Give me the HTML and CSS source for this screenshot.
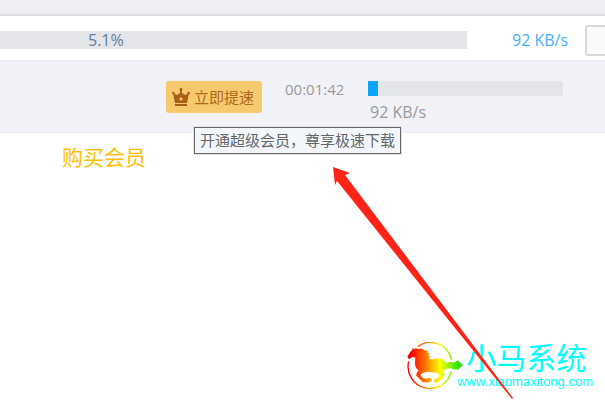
FILE: index.html
```html
<!DOCTYPE html>
<html lang="zh-CN">
<head>
<meta charset="utf-8">
<meta name="viewport" content="width=device-width, initial-scale=1">
<title>下载</title>
<link rel="stylesheet" href="styles.css">
</head>
<body>
<header class="topbar"></header>
<main>
  <section class="task">
    <div class="task-bar">5.1%</div>
    <span class="task-speed">92 KB/s</span>
    <button class="task-action" type="button" aria-label="操作"></button>
  </section>
  <section class="boost">
    <div class="boost-cta">
      <button class="boost-button" type="button">
        <svg class="crown" viewBox="0 0 18 18" aria-hidden="true">
          <path d="M1 5 5 7 8 5V2h2v3L13 7 17 5 15 15H3Z"/>
          <circle cx="1.300" cy="5" r="1.300"/><circle cx="9" cy="1.500" r="1.400"/><circle cx="16.700" cy="5" r="1.300"/>
          <path d="M3 16h12v2H3z"/>
          <path class="crown-gem" d="M9 9 11 11 9 13 7 11Z"/>
        </svg>
        立即提速
      </button>
      <div class="tooltip" role="tooltip">开通超级会员，尊享极速下载</div>
    </div>
    <time class="boost-time">00:01:42</time>
    <div class="boost-progress">
      <div class="meter"><div class="meter-fill"></div></div>
      <span class="boost-speed">92 KB/s</span>
    </div>
  </section>
  <a class="buy" href="#">购买会员</a>
</main>
<svg class="arrow" viewBox="0 0 180 234" aria-hidden="true">
  <path d="M0 0 17 6 12 8 180 231 179 232 4 14 2 18Z"/>
</svg>
<footer class="brand">
  <svg class="horse" viewBox="0 0 174 140" aria-hidden="true">
    <defs>
      <linearGradient id="rainbow" gradientUnits="userSpaceOnUse" x1="0" y1="0" x2="170" y2="0">
        <stop offset="0" stop-color="#f00"/><stop offset=".08" stop-color="#f00"/><stop offset=".3" stop-color="#ff6a00"/><stop offset=".58" stop-color="#ff0"/><stop offset=".85" stop-color="#4bea00"/><stop offset="1" stop-color="#0d0"/>
      </linearGradient>
    </defs>
    <path class="ring" d="M32 13A65 65 0 0 1 133 52M133 88A65 65 0 0 1 5 58"/>
    <path class="horse-body" d="M1 43 11 28 17 22 16 16 22 21 28 17 30 21 42 19 51 22 55 26 63 24 60 30 68 34 64 39 69 43 66 49Q74 54 84 50 101 45 110 54L118 62Q131 57 142 61L152 54 158 60 168 69 159 76 155 82 141 82 130 78 118 80 109 85 108 91 114 96 106 109 91 121 82 120 82 113 94 106 97 98 88 92Q73 91 60 89L46 93 40 98 48 108 58 110 70 107 75 116 65 121 48 120 28 101 29 92 35 85Q23 78 24 62L25 47 17 44 6 51Z"/>
  </svg>
  <div class="brand-text">
    <strong class="brand-name">小马系统</strong>
    <span class="brand-url">www.xiaomaxitong.com</span>
  </div>
</footer>
</body>
</html>
```
FILE: styles.css
```css
* {
  box-sizing: border-box;
}

body {
  position: relative;
  min-height: 100vh;
  margin: 0;
  overflow: hidden;
  display: flex;
  flex-direction: column;
  justify-content: space-between;
  background: #fff;
  color: #999;
  font: 16px/20px "Open Sans", "Noto Sans CJK SC", sans-serif;
}

button {
  margin: 0;
  padding: 0;
  font: inherit;
}

.topbar {
  height: 16px;
  background: #eeeff5;
  border-bottom: 2px solid #dcdde3;
}

main {
  flex: 1;
}

.task {
  display: flex;
  align-items: center;
  height: 44px;
  padding-top: 4px;
}

.task-bar {
  flex: 1;
  height: 18px;
  padding-left: 88px;
  background: #e4e5e9;
  color: #5c7f9c;
  line-height: 18px;
}

.task-speed {
  width: 118px;
  padding-left: 45px;
  color: #4ab1fb;
}

.task-action {
  width: 20px;
  height: 31px;
  border: 2px solid #d8d8d8;
  border-right: 0;
  border-radius: 3px 0 0 3px;
  background: #fafafa;
}

.boost {
  display: flex;
  align-items: flex-start;
  height: 73px;
  padding: 20px 42px 0 166px;
  background: #f1f2f7;
  border: solid #e9eaed;
  border-width: 1px 0;
}

.boost-cta {
  position: relative;
}

.boost-button {
  display: flex;
  align-items: center;
  gap: 4px;
  width: 96px;
  height: 32px;
  padding-left: 6px;
  border: 0;
  border-radius: 3px;
  background: #f6ca6c;
  color: #ad6820;
  font-size: 15px;
  white-space: nowrap;
}

.crown {
  flex: none;
  width: 18px;
  height: 18px;
  fill: #a85f18;
}

.crown-gem {
  fill: #f6ca6c;
}

.tooltip {
  position: absolute;
  top: 46px;
  left: 28px;
  padding: 2px 5px;
  border: 1px solid #666;
  outline: 1px solid #e4e4e4;
  background: #f3f7fc;
  color: #666;
  font-size: 15px;
  line-height: 21px;
  white-space: nowrap;
}

.boost-time {
  width: 83px;
  margin-left: 23px;
  font-size: 15px;
  line-height: 16px;
}

.boost-progress {
  flex: 1;
}

.meter {
  height: 15px;
  margin-bottom: 6px;
  background: #e4e5e9;
}

.meter-fill {
  width: 5%;
  height: 100%;
  background: #0ba4ff;
}

.boost-speed {
  padding-left: 2px;
}

.buy {
  display: inline-block;
  margin: 10px 0 0 62px;
  color: #ffbf00;
  font-size: 21px;
  line-height: 28px;
  text-decoration: none;
}

.arrow {
  position: absolute;
  z-index: 1;
  top: 167px;
  left: 333px;
  width: 180px;
  height: 234px;
  fill: #ff2318;
}

.brand {
  position: relative;
  display: flex;
  justify-content: flex-end;
  padding: 0 12px 10px 0;
  color: #0ff;
}

.horse {
  width: 58px;
  height: 47px;
  margin-right: -8px;
}

.ring {
  fill: none;
  stroke: url(#rainbow);
  stroke-width: 4;
}

.horse-body {
  fill: url(#rainbow);
}

.brand-text {
  display: flex;
  flex-direction: column;
}

.brand-name {
  padding-left: 9px;
  font-size: 30px;
  font-weight: 400;
  line-height: 32px;
}

.brand-url {
  font: 13px/16px "Liberation Sans", sans-serif;
}
```
